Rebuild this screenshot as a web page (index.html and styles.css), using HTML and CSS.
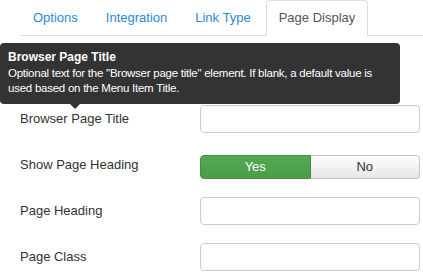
FILE: index.html
```html
<!DOCTYPE html>
<html lang="en">
<head>
    <meta charset="UTF-8">
    <meta name="viewport" content="width=device-width, initial-scale=1.0">
    <title>Page Display</title>
    <link rel="stylesheet" href="styles.css">
</head>
<body>

<div class="page">
    <ul class="tabs">
        <li><a href="#">Options</a></li>
        <li><a href="#">Integration</a></li>
        <li><a href="#">Link Type</a></li>
        <li class="active"><a href="#">Page Display</a></li>
    </ul>

    <!-- Tooltip shown over the first field -->
    <div class="tooltip">
        <strong>Browser Page Title</strong><br>
        Optional text for the "Browser page title" element. If blank, a default value is<br>
        used based on the Menu Item Title.
    </div>

    <form class="form">
        <div class="control-group">
            <label class="control-label">Browser Page Title</label>
            <div class="controls"><input type="text" class="input"></div>
        </div>
        <div class="control-group">
            <label class="control-label">Show Page Heading</label>
            <div class="controls">
                <div class="btn-group">
                    <span class="btn btn-yes">Yes</span>
                    <span class="btn btn-no">No</span>
                </div>
            </div>
        </div>
        <div class="control-group">
            <label class="control-label">Page Heading</label>
            <div class="controls"><input type="text" class="input"></div>
        </div>
        <div class="control-group">
            <label class="control-label">Page Class</label>
            <div class="controls"><input type="text" class="input"></div>
        </div>
    </form>
</div>

</body>
</html>
```

FILE: styles.css
```css
/* Basic styling for the page */
body {
    font-family: "Liberation Sans", Arial, sans-serif;
    font-size: 13px;
    color: #333;
    background-color: #fff;
    margin: 0;
}
.page {
    position: relative;
    padding-left: 20px;
}

/* Tabs */
.tabs {
    display: flex;
    list-style: none;
    margin: 0;
    padding: 0;
    height: 35px;
    border-bottom: 1px solid #ddd;
}
.tabs li a {
    display: block;
    padding: 8px 12px;
    line-height: 18px;
    margin-right: 2px;
    border: 1px solid transparent;
    border-radius: 4px 4px 0 0;
    color: #2a8ad6;
    text-decoration: none;
}
.tabs li.active a {
    color: #555;
    background-color: #fff;
    border-color: #ddd #ddd transparent;
}

/* Tooltip */
.tooltip {
    position: absolute;
    left: 0;
    top: 43px;
    width: 384px;
    padding: 7px 8px;
    background-color: #333;
    color: #fff;
    font-size: 11.5px;
    letter-spacing: -0.25px;
    line-height: 15.5px;
    white-space: nowrap;
    border-radius: 4px;
}
.tooltip strong {
    font-size: 12px;
    letter-spacing: 0;
}
.tooltip::after {
    content: "";
    position: absolute;
    left: 70px;
    bottom: -5px;
    border-top: 5px solid #333;
    border-left: 5px solid transparent;
    border-right: 5px solid transparent;
}

/* Form */
.form {
    margin: 0;
    padding-top: 69px;
}
.control-group {
    display: flex;
    margin-bottom: 18px;
}
.control-label {
    width: 180px;
    padding-top: 5px;
    line-height: 18px;
}
.input {
    box-sizing: border-box;
    width: 220px;
    height: 28px;
    margin: 0;
    border: 1px solid #ccc;
    border-radius: 4px;
    font-family: inherit;
}
.btn-group {
    display: flex;
    width: 220px;
    margin-top: 4px;
}
.btn {
    flex: 1;
    height: 24px;
    line-height: 22px;
    text-align: center;
    box-sizing: border-box;
    border: 1px solid #c5c5c5;
}
.btn-yes {
    color: #fff;
    background: linear-gradient(#55a855, #4a9e4a);
    border-color: #3f8f3f;
    border-radius: 4px 0 0 4px;
}
.btn-no {
    color: #333;
    background: linear-gradient(#fff, #e6e6e6);
    border-left: none;
    border-radius: 0 4px 4px 0;
}
```
